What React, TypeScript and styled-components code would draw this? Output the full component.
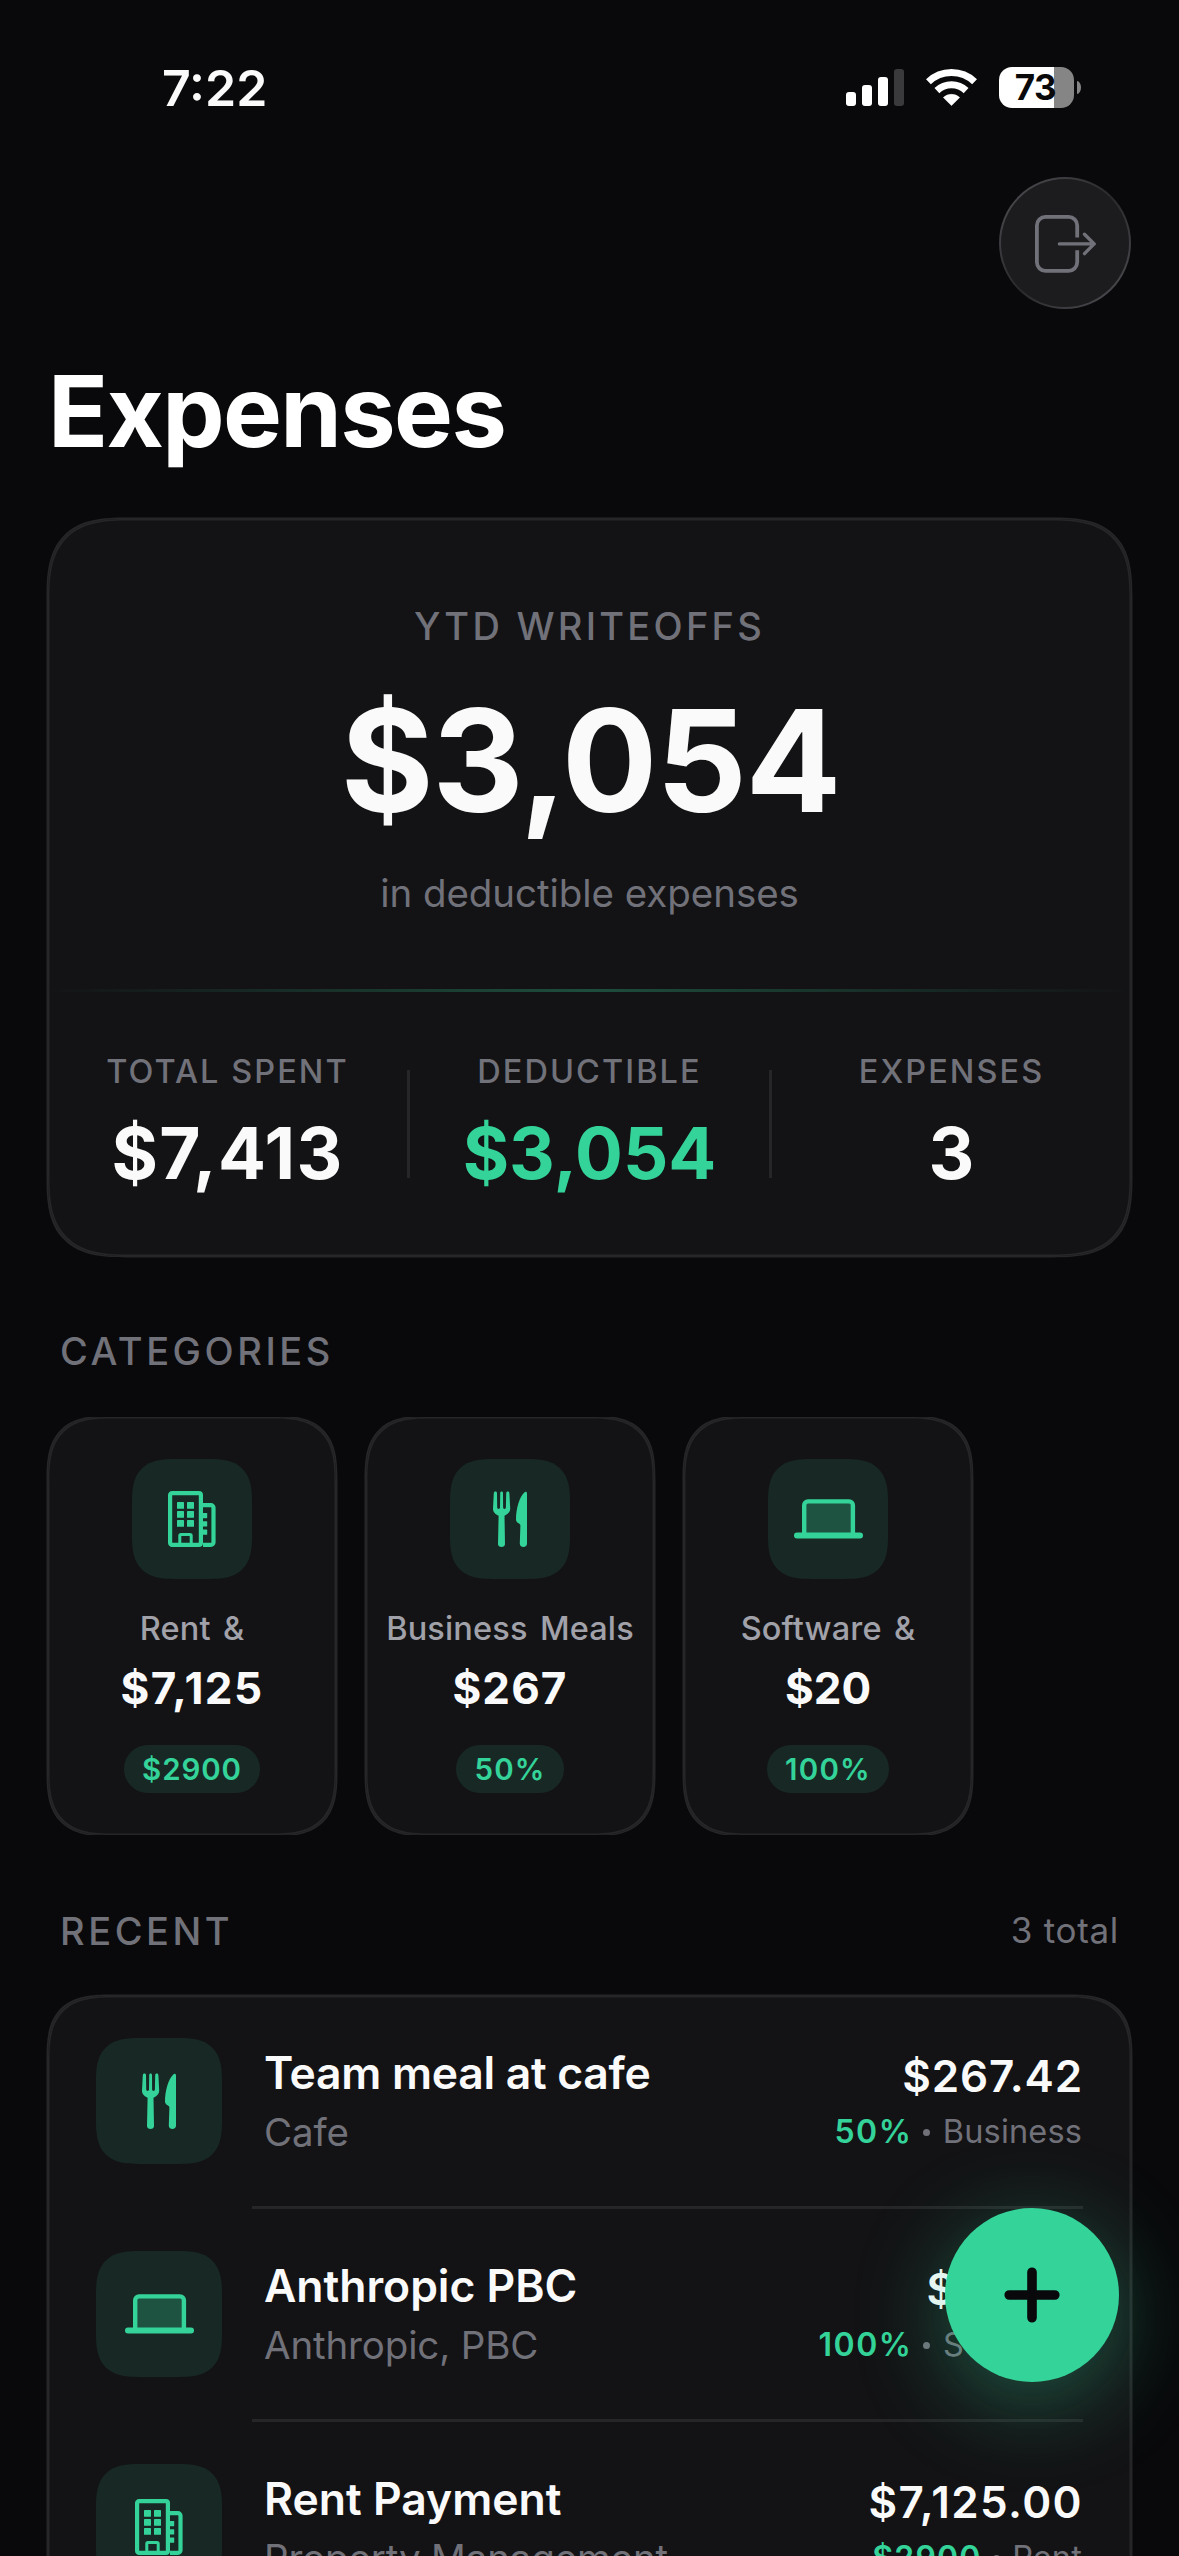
import React from "react";
import styled, { createGlobalStyle, css } from "styled-components";

const color = {
  bg: "#09090b",
  card: "#131315",
  line: "#262628",
  text: "#fafafa",
  soft: "#a1a1aa",
  muted: "#71717a",
  accent: "#34d399",
  tint: "#182925",
};

/* Continuous-curvature corner, falling back to a plain radius. */
const squircle = (r: number) => css`
  border-radius: ${r}px;
  @supports (corner-shape: superellipse(1.48)) {
    border-radius: ${r * 1.33}px;
    corner-shape: superellipse(1.48);
  }
`;

const hairline = css`
  background: ${color.card};
  box-shadow: 0 0 0 1.5px ${color.line}, inset 0 0 0 1.5px ${color.line};
`;

const GlobalStyle = createGlobalStyle`
  *, *::before, *::after { box-sizing: border-box; }
  html, body { margin: 0; padding: 0; background: ${color.bg}; }
  body { overflow: hidden; }
`;

const Screen = styled.main`
  position: relative;
  width: 1179px;
  height: 2556px;
  overflow: hidden;
  background: ${color.bg};
  color: ${color.text};
  font-family: Inter, "Liberation Sans", sans-serif;
  white-space: nowrap;
`;

/* ---------- status bar ---------- */

const StatusBar = styled.header`
  display: flex;
  align-items: center;
  justify-content: space-between;
  height: 177px;
  padding: 0 98px 2px 162px;
`;

const Clock = styled.time`
  font-size: 50px;
  font-weight: 600;
  line-height: 60px;
`;

const StatusIcons = styled.div`
  display: flex;
  align-items: center;
  gap: 22px;
`;

const SignalBars = styled.div`
  display: flex;
  align-items: flex-end;
  gap: 6px;
  height: 37px;
`;

const SignalBar = styled.span<{ $height: number; $off?: boolean }>`
  width: 10px;
  height: ${(p) => p.$height}px;
  border-radius: 3px;
  background: ${(p) => (p.$off ? "#3a3a3c" : "#fff")};
`;

const Battery = styled.div`
  display: flex;
  align-items: center;
  gap: 3px;
`;

const BatteryBody = styled.div`
  display: flex;
  align-items: center;
  justify-content: center;
  width: 75px;
  height: 41px;
  padding-right: 2px;
  border-radius: 13px;
  background: linear-gradient(90deg, #fff 55px, #858585 55px);
  color: ${color.bg};
  font-size: 35px;
  font-weight: 700;
  letter-spacing: -0.5px;
  line-height: 41px;
`;

const BatteryCap = styled.span`
  width: 4px;
  height: 13px;
  border-radius: 0 4px 4px 0 / 0 6.5px 6.5px 0;
  background: #858585;
`;

/* ---------- page header ---------- */

const Toolbar = styled.div`
  display: flex;
  justify-content: flex-end;
  padding: 0 48px;
`;

const SignOutButton = styled.button`
  display: flex;
  align-items: center;
  justify-content: center;
  width: 132px;
  height: 132px;
  padding: 1px 0 0 2px;
  border: 2.5px solid transparent;
  border-radius: 50%;
  background: linear-gradient(#1c1c1e, #1c1c1e) padding-box,
    linear-gradient(135deg, #47474c 12%, #29292c 50%, #47474c 88%) border-box;
`;

const Title = styled.h1`
  height: 210px;
  margin: 0;
  padding-left: 48px;
  color: #fff;
  font-size: 99px;
  font-weight: 700;
  letter-spacing: -1.65px;
  line-height: 205px;
`;

/* ---------- summary ---------- */

const SummaryCard = styled.section`
  ${hairline}
  ${squircle(60)}
  height: 737px;
  margin: 0 48px;
  padding-top: 84px;
  text-align: center;
`;

const SummaryLabel = styled.div`
  color: ${color.muted};
  font-size: 38px;
  font-weight: 500;
  letter-spacing: 3.25px;
  line-height: 46px;
`;

const SummaryAmount = styled.div`
  margin: 25px 0 24px;
  padding-left: 2px;
  font-size: 142px;
  font-weight: 650;
  letter-spacing: -1.3px;
  line-height: 172px;
`;

const SummaryNote = styled.div`
  color: ${color.muted};
  font-size: 38.5px;
  letter-spacing: -0.05px;
  line-height: 46px;
`;

const GlowRule = styled.hr`
  height: 3px;
  margin: 73px 0 60px;
  border: 0;
  background: linear-gradient(90deg, transparent, rgba(52, 211, 153, 0.3), transparent);
`;

const Stats = styled.div`
  display: grid;
  grid-template-columns: 1fr 3px 1fr 3px 1fr;
  align-items: center;
`;

const StatDivider = styled.span`
  height: 108px;
  background: ${color.line};
`;

const StatLabel = styled.div`
  color: ${color.muted};
  font-size: 32.5px;
  font-weight: 500;
  letter-spacing: 2.05px;
  line-height: 40px;
`;

const StatValue = styled.div<{ $accent?: boolean; $tracking: number }>`
  margin-top: 18px;
  color: ${(p) => (p.$accent ? color.accent : color.text)};
  font-size: 71px;
  font-weight: 700;
  letter-spacing: ${(p) => p.$tracking}px;
  line-height: 86px;
`;

/* ---------- sections ---------- */

const SectionHeader = styled.div<{ $gap: number }>`
  display: flex;
  align-items: flex-start;
  justify-content: space-between;
  height: 46px;
  margin: ${(p) => p.$gap}px 60px 0;
  color: ${color.muted};
`;

const SectionTitle = styled.h2`
  margin: 0;
  font-size: 38px;
  font-weight: 500;
  letter-spacing: 3.55px;
  line-height: 46px;
`;

const SectionCount = styled.span`
  font-size: 35px;
  letter-spacing: 0.7px;
  line-height: 44px;
`;

const IconTile = styled.span<{ $size: number }>`
  display: flex;
  flex: none;
  align-items: center;
  justify-content: center;
  width: ${(p) => p.$size}px;
  height: ${(p) => p.$size}px;
  background: ${color.tint};
  color: ${color.accent};
  ${squircle(33)}
`;

const CategoryStrip = styled.div`
  display: flex;
  gap: 30px;
  margin-top: 43px;
  padding: 0 48px;
  overflow: hidden;
`;

const CategoryCard = styled.article`
  ${hairline}
  ${squircle(48)}
  display: flex;
  flex: none;
  flex-direction: column;
  align-items: center;
  width: 288px;
  height: 418px;
  padding-top: 42px;
`;

const CategoryName = styled.div`
  margin-top: 30px;
  color: ${color.soft};
  font-size: 32.5px;
  font-weight: 500;
  letter-spacing: 0.15px;
  line-height: 40px;
  word-spacing: 3.5px;
`;

const CategoryAmount = styled.div<{ $tracking: number }>`
  margin-top: 12px;
  font-size: 44px;
  font-weight: 700;
  letter-spacing: ${(p) => p.$tracking}px;
  line-height: 54px;
`;

const Badge = styled.span<{ $tracking: number }>`
  height: 48px;
  margin-top: 30px;
  padding: 0 18.5px;
  border-radius: 24px;
  background: ${color.tint};
  color: ${color.accent};
  font-size: 29.5px;
  font-weight: 600;
  letter-spacing: ${(p) => p.$tracking}px;
  line-height: 48px;
`;

/* ---------- recent list ---------- */

const ListCard = styled.section`
  ${hairline}
  ${squircle(48)}
  margin: 42px 48px 0;
`;

const ListRow = styled.article`
  display: flex;
  align-items: center;
  height: 210px;
  padding: 0 48px;
`;

const ListRule = styled.hr`
  height: 3px;
  margin: 0 48px 0 204px;
  border: 0;
  background: ${color.line};
`;

const RowText = styled.div`
  flex: 1;
  margin-left: 42px;
  padding-bottom: 2px;
`;

const RowTitle = styled.div<{ $tracking: number }>`
  font-size: 44.5px;
  font-weight: 600;
  letter-spacing: ${(p) => p.$tracking}px;
  line-height: 54px;
`;

const RowVendor = styled.div`
  margin-top: 9px;
  color: ${color.muted};
  font-size: 38.5px;
  letter-spacing: -0.15px;
  line-height: 46px;
`;

const RowFigures = styled.div`
  display: flex;
  flex-direction: column;
  align-items: flex-end;
  padding-bottom: 1px;
`;

const RowAmount = styled.div<{ $tracking: number }>`
  font-size: 44px;
  font-weight: 600;
  letter-spacing: ${(p) => p.$tracking}px;
  line-height: 54px;
`;

const RowMeta = styled.div`
  display: flex;
  align-items: center;
  margin-top: 9px;
  padding-right: 1px;
  color: ${color.muted};
  font-size: 32.5px;
  letter-spacing: 0.15px;
  line-height: 40px;
`;

const RowShare = styled.span<{ $tracking: number }>`
  color: ${color.accent};
  font-size: 32px;
  font-weight: 600;
  letter-spacing: ${(p) => p.$tracking}px;
`;

const Dot = styled.span`
  width: 7px;
  height: 7px;
  margin: 0 12.5px 0 11px;
  border-radius: 50%;
  background: ${color.muted};
`;

const AddButton = styled.button`
  position: absolute;
  top: 2208px;
  right: 60px;
  display: flex;
  align-items: center;
  justify-content: center;
  width: 174px;
  height: 174px;
  padding: 0;
  border: 0;
  border-radius: 50%;
  background: ${color.accent};
  box-shadow: 0 20px 88px rgba(52, 211, 153, 0.36);
`;

/* ---------- icons ---------- */

const WifiIcon = () => (
  <svg width="51" height="37" viewBox="0 0 51 37" fill="none" stroke="#fff" strokeWidth="7">
    <path d="M2.45 12.7A33.5 33.5 0 0 1 48.55 12.7" />
    <path d="M10.9 21.6A21.2 21.2 0 0 1 40.1 21.6" />
    <path d="M17.4 28.5A12 12 0 0 1 33.6 28.5L25.5 36.6Z" fill="#fff" stroke="#fff" strokeWidth=".6" strokeLinejoin="round" />
  </svg>
);

const SignOutIcon = () => (
  <svg width="62" height="58" viewBox="0 0 62 58" fill="none" stroke={color.muted} strokeLinecap="round" strokeLinejoin="round">
    <path d="M42.2 22.6V10.5A8.6 8.6 0 0 0 33.6 1.9H10.5A8.6 8.6 0 0 0 1.9 10.5V47.3A8.6 8.6 0 0 0 10.5 55.9H33.6A8.6 8.6 0 0 0 42.2 47.3V35.2" strokeWidth="3.8" strokeLinecap="butt" />
    <path d="M24.4 28.9H59.2M49.5 19.2L59.2 28.9L49.5 38.6" strokeWidth="3.4" />
  </svg>
);

const BuildingIcon = () => (
  <svg width="48" height="56" viewBox="0 0 48 56" fill="none" stroke="currentColor" strokeWidth="4.2">
    <rect x="2.1" y="2.1" width="30.8" height="51.8" rx="2" />
    <path d="M35 14.1H42.9A2.6 2.6 0 0 1 45.5 16.7V51.3A2.6 2.6 0 0 1 42.9 53.9H35" />
    <path d="M11.8 54V44.8A1.3 1.3 0 0 1 13.1 43.5H21.9A1.3 1.3 0 0 1 23.2 44.8V54" strokeWidth="3" />
    <g fill="currentColor" stroke="none">
      {[11, 20, 29].map((y) => (
        <React.Fragment key={y}>
          <rect x="9" y={y} width="7" height="6.8" rx=".6" />
          <rect x="19" y={y} width="7" height="6.8" rx=".6" />
        </React.Fragment>
      ))}
      {[22, 30.3, 38.6].map((y) => (
        <rect key={y} x="34.5" y={y} width="4.7" height="5.2" rx=".6" />
      ))}
    </g>
  </svg>
);

const MealIcon = () => (
  <svg width="34" height="56" viewBox="0 0 34 56" fill="currentColor">
    <path d="M2.4.6C1.4.6.9 1.3.8 2.2L0 17.5C0 20.8 1.6 22.6 5.6 24.8L5 53C5 54.8 6.5 56 8.5 56C10.5 56 12 54.8 12 53L11.5 24.8C15.4 22.6 17.2 20.8 17.2 17.5L16.4 2.2C16.3 1.2 15.8.6 14.8.6C13.8.6 13.2 1.2 13.2 2.2L12.9 16.5A1.4 1.4 0 0 1 10.1 16.5L10 2.2C10 1.2 9.5.6 8.6.6C7.7.6 7.2 1.2 7.2 2.2L7 16.5A1.4 1.4 0 0 1 4.2 16.5L4 2.2C4 1.2 3.4.6 2.4.6Z" />
    <path d="M34 2.5C34 .9 32.6.2 31.3 1.4C26.5 6 23 17 23 28.5C23 30.5 24 31.4 26 32.4C27 33 27.4 33.6 27.4 34.6L26.8 52.6C26.8 54.8 28.2 56 30.4 56C32.6 56 34 54.8 34 52.6Z" />
  </svg>
);

const LaptopIcon = () => (
  <svg width="69" height="40" viewBox="0 0 69 40" fill="none">
    <path d="M10.2 35V6.2A3.8 3.8 0 0 1 14 2.4H55.1A3.8 3.8 0 0 1 58.9 6.2V35Z" fill="currentColor" fillOpacity=".25" />
    <path d="M10.2 35V6.2A3.8 3.8 0 0 1 14 2.4H55.1A3.8 3.8 0 0 1 58.9 6.2V35" stroke="currentColor" strokeWidth="4.4" />
    <rect y="33.6" width="69" height="6" rx="3" fill="currentColor" />
  </svg>
);

const PlusIcon = () => (
  <svg width="56" height="56" viewBox="0 0 56 56" stroke={color.bg} strokeWidth="9.6" strokeLinecap="round">
    <path d="M5.2 28H50.8M28 5.2V50.8" />
  </svg>
);

const icons = { building: BuildingIcon, meal: MealIcon, laptop: LaptopIcon };
type IconName = keyof typeof icons;

/* ---------- data ---------- */

const stats = [
  { label: "TOTAL SPENT", value: "$7,413", tracking: 1.3 },
  { label: "DEDUCTIBLE", value: "$3,054", tracking: 0, accent: true },
  { label: "EXPENSES", value: "3", tracking: 0 },
];

interface Category {
  icon: IconName;
  name: string;
  amount: string;
  amountTracking: number;
  share: string;
  shareTracking: number;
}

const categories: Category[] = [
  { icon: "building", name: "Rent &", amount: "$7,125", amountTracking: 1.4, share: "$2900", shareTracking: 0.9 },
  { icon: "meal", name: "Business Meals", amount: "$267", amountTracking: 1.1, share: "50%", shareTracking: 1.2 },
  { icon: "laptop", name: "Software &", amount: "$20", amountTracking: 0, share: "100%", shareTracking: 1.2 },
];

interface Expense {
  icon: IconName;
  title: string;
  titleTracking: number;
  vendor: string;
  amount: string;
  amountTracking: number;
  share: string;
  shareTracking: number;
  category: string;
}

const expenses: Expense[] = [
  { icon: "meal", title: "Team meal at cafe", titleTracking: -0.3, vendor: "Cafe", amount: "$267.42", amountTracking: 0.84, share: "50%", shareTracking: 1.5, category: "Business" },
  { icon: "laptop", title: "Anthropic PBC", titleTracking: -0.05, vendor: "Anthropic, PBC", amount: "$20.00", amountTracking: 0.3, share: "100%", shareTracking: 1.5, category: "Software" },
  { icon: "building", title: "Rent Payment", titleTracking: 0, vendor: "Property Management", amount: "$7,125.00", amountTracking: 1.37, share: "$2900", shareTracking: 1.2, category: "Rent" },
];

export default function App() {
  return (
    <Screen>
      <GlobalStyle />

      <StatusBar>
        <Clock>7:22</Clock>
        <StatusIcons>
          <SignalBars>
            <SignalBar $height={14} />
            <SignalBar $height={21} />
            <SignalBar $height={29} />
            <SignalBar $height={37} $off />
          </SignalBars>
          <WifiIcon />
          <Battery>
            <BatteryBody>73</BatteryBody>
            <BatteryCap />
          </Battery>
        </StatusIcons>
      </StatusBar>

      <Toolbar>
        <SignOutButton aria-label="Sign out">
          <SignOutIcon />
        </SignOutButton>
      </Toolbar>
      <Title>Expenses</Title>

      <SummaryCard>
        <SummaryLabel>YTD WRITEOFFS</SummaryLabel>
        <SummaryAmount>$3,054</SummaryAmount>
        <SummaryNote>in deductible expenses</SummaryNote>
        <GlowRule />
        <Stats>
          {stats.map((stat, i) => (
            <React.Fragment key={stat.label}>
              {i > 0 && <StatDivider />}
              <div>
                <StatLabel>{stat.label}</StatLabel>
                <StatValue $accent={stat.accent} $tracking={stat.tracking}>
                  {stat.value}
                </StatValue>
              </div>
            </React.Fragment>
          ))}
        </Stats>
      </SummaryCard>

      <SectionHeader $gap={72}>
        <SectionTitle>CATEGORIES</SectionTitle>
      </SectionHeader>
      <CategoryStrip>
        {categories.map((category) => {
          const Icon = icons[category.icon];
          return (
            <CategoryCard key={category.name}>
              <IconTile $size={120}>
                <Icon />
              </IconTile>
              <CategoryName>{category.name}</CategoryName>
              <CategoryAmount $tracking={category.amountTracking}>{category.amount}</CategoryAmount>
              <Badge $tracking={category.shareTracking}>{category.share}</Badge>
            </CategoryCard>
          );
        })}
      </CategoryStrip>

      <SectionHeader $gap={73}>
        <SectionTitle>RECENT</SectionTitle>
        <SectionCount>3 total</SectionCount>
      </SectionHeader>
      <ListCard>
        {expenses.map((expense, i) => {
          const Icon = icons[expense.icon];
          return (
            <React.Fragment key={expense.title}>
              {i > 0 && <ListRule />}
              <ListRow>
                <IconTile $size={126}>
                  <Icon />
                </IconTile>
                <RowText>
                  <RowTitle $tracking={expense.titleTracking}>{expense.title}</RowTitle>
                  <RowVendor>{expense.vendor}</RowVendor>
                </RowText>
                <RowFigures>
                  <RowAmount $tracking={expense.amountTracking}>{expense.amount}</RowAmount>
                  <RowMeta>
                    <RowShare $tracking={expense.shareTracking}>{expense.share}</RowShare>
                    <Dot />
                    {expense.category}
                  </RowMeta>
                </RowFigures>
              </ListRow>
            </React.Fragment>
          );
        })}
      </ListCard>

      <AddButton aria-label="Add expense">
        <PlusIcon />
      </AddButton>
    </Screen>
  );
}
